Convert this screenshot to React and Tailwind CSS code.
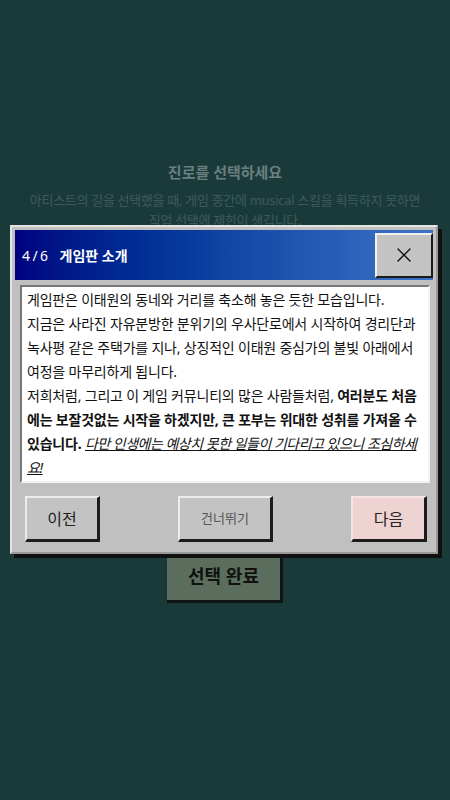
import { X } from "lucide-react";

export default function App() {
  return (
    <div className="relative min-h-screen overflow-hidden bg-[#1a3a3a] font-['Noto_Sans','Noto_Sans_CJK_KR',sans-serif]">
      {/* page behind the modal */}
      <div className="flex flex-col items-center pt-[160px]">
        <h2 className="text-[15px] font-bold leading-[24px] text-[#6a8080]">
          진로를 선택하세요
        </h2>
        <p className="mt-[6px] text-center text-[13px] leading-[20px] tracking-[-0.3px] text-[#3d5a5a]">
          아티스트의 길을 선택했을 때, 게임 중간에 musical 스킬을 획득하지 못하면
          <br />
          직업 선택에 제한이 생깁니다.
        </p>
        <div className="h-[322px]" />
        <button className="h-[51px] w-[116px] border-b-[3px] border-r-[3px] border-[#0d1414] bg-[#5b6e5e] text-[18px] font-bold text-[#111]">
          선택 완료
        </button>
      </div>

      {/* modal */}
      <div className="absolute left-[10px] top-[225px] w-[428px] border-2 border-b-[#9a9a9a] border-l-[#e4e4e4] border-r-[#9a9a9a] border-t-[#e4e4e4] bg-[#c0c0c0] p-[3px] shadow-[4px_4px_0_#101010]">
        <div className="flex h-[50px] items-center bg-gradient-to-r from-[#000080] to-[#3d74c8] pl-[7px]">
          <span className="text-[14px] tracking-[-0.6px] text-white">4 / 6</span>
          <span className="ml-[12px] text-[14px] font-bold text-white">게임판 소개</span>
          <button className="ml-auto flex h-[45px] w-[58px] items-center justify-center border-2 border-b-[#1a1a1a] border-l-[#f0f0f0] border-r-[#1a1a1a] border-t-[#f0f0f0] bg-[#c3c3c3]">
            <X size={24} strokeWidth={1.4} color="#111" />
          </button>
        </div>

        <div className="ml-[5px] mr-[3px] mt-[5px] border-2 border-b-[#f2f2f2] border-l-[#777] border-r-[#f2f2f2] border-t-[#777] bg-white px-[5px] py-[1px] text-[14px] leading-[24px] tracking-[-0.2px] text-[#111]">
          게임판은 이태원의 동네와 거리를 축소해 놓은 듯한 모습입니다.
          <br />
          지금은 사라진 자유분방한 분위기의 우사단로에서 시작하여 경리단과 녹사평 같은 주택가를 지나, 상징적인 이태원 중심가의 불빛 아래에서 여정을 마무리하게 됩니다.
          <br />
          저희처럼, 그리고 이 게임 커뮤니티의 많은 사람들처럼,{" "}
          <b>여러분도 처음에는 보잘것없는 시작을 하겠지만, 큰 포부는 위대한 성취를 가져올 수 있습니다.</b>{" "}
          <i className="tracking-[-0.5px] underline">다만 인생에는 예상치 못한 일들이 기다리고 있으니 조심하세요!</i>
        </div>

        <div className="mb-[7px] mt-[13px] flex justify-between pl-[10px] pr-[6px]">
          <button className="h-[46px] w-[75px] border-b-[3px] border-l-2 border-r-[3px] border-t-2 border-b-[#1c1c1c] border-l-[#ececec] border-r-[#1c1c1c] border-t-[#ececec] bg-[#c3c3c3] text-[16px] text-[#222]">
            이전
          </button>
          <button className="h-[46px] w-[95px] border-b-[3px] border-l-2 border-r-[3px] border-t-2 border-b-[#1c1c1c] border-l-[#ececec] border-r-[#1c1c1c] border-t-[#ececec] bg-[#c3c3c3] text-[13px] text-[#555]">
            건너뛰기
          </button>
          <button className="h-[46px] w-[76px] border-b-[3px] border-l-2 border-r-[3px] border-t-2 border-b-[#1c1c1c] border-l-[#f4e4e4] border-r-[#1c1c1c] border-t-[#f4e4e4] bg-[#efd3d3] text-[16px] text-[#222]">
            다음
          </button>
        </div>
      </div>
    </div>
  );
}
